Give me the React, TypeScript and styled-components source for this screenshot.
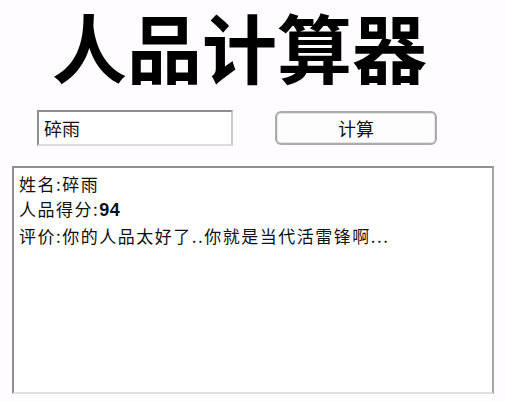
import React from "react";
import styled, { createGlobalStyle } from "styled-components";

const GlobalStyle = createGlobalStyle`
  html, body {
    margin: 0;
    padding: 0;
    background: #fefcfe;
  }
  body {
    font-family: "Noto Sans CJK SC", "DejaVu Sans", sans-serif;
    color: #111;
  }
`;

const Page = styled.div`
  width: 506px;
  height: 402px;
  display: flex;
  flex-direction: column;
`;

const Title = styled.h1`
  margin: -9px 0 0 52px;
  font-size: 75px;
  line-height: normal;
  font-weight: 700;
  color: #000;
`;

const Form = styled.div`
  display: flex;
  align-items: center;
  gap: 42px;
  margin: 10px 0 0 37px;
`;

const NameInput = styled.input`
  box-sizing: border-box;
  width: 196px;
  height: 36px;
  padding: 0 5px;
  border: 2px solid #8c8f8e;
  border-right-color: #c9cbca;
  border-bottom-color: #dcdedd;
  background: #fff;
  font-family: "Noto Sans CJK SC", sans-serif;
  font-size: 18px;
  color: #111;
  outline: none;
`;

const CalcButton = styled.button`
  box-sizing: border-box;
  width: 162px;
  height: 34px;
  border: 2px solid #a9acab;
  border-radius: 6px;
  box-shadow: inset 0 0 0 1px #e6e8e7;
  background: #fdfdfd;
  font-family: "Noto Sans CJK SC", sans-serif;
  font-size: 18px;
  color: #111;
`;

const Result = styled.div`
  box-sizing: border-box;
  width: 482px;
  height: 228px;
  margin: 20px 0 0 12px;
  padding: 3px 5px;
  border: 2px solid #8f9291;
  border-right-color: #a3a6a5;
  border-bottom-color: #dfe1e0;
  background: #fff;
  font-size: 17px;
  letter-spacing: 1.5px;
  line-height: 25px;
`;

const Line = styled.div`
  white-space: nowrap;
`;

const Score = styled.span`
  font-family: "Liberation Sans", Arial, sans-serif;
  font-weight: 700;
  font-size: 18px;
  letter-spacing: 0.5px;
`;

export default function App() {
  return (
    <>
      <GlobalStyle />
      <Page>
        <Title>人品计算器</Title>
        <Form>
          <NameInput defaultValue="碎雨" />
          <CalcButton>计算</CalcButton>
        </Form>
        <Result>
          <Line>姓名:碎雨</Line>
          <Line>
            人品得分:<Score>94</Score>
          </Line>
          <Line>评价:你的人品太好了..你就是当代活雷锋啊...</Line>
        </Result>
      </Page>
    </>
  );
}
